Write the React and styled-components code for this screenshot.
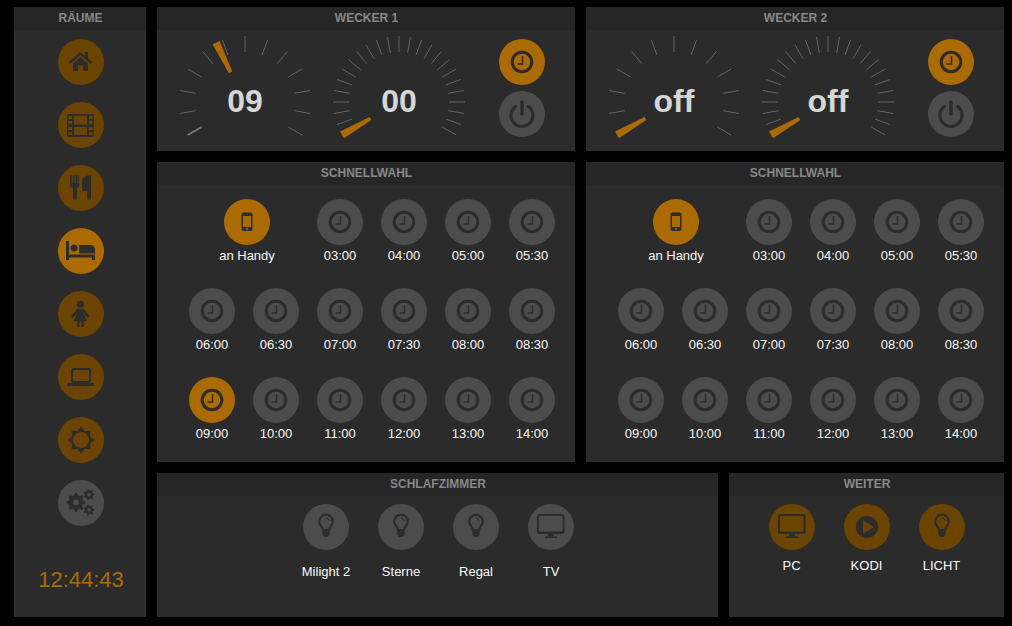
import React from 'react';
import styled, { createGlobalStyle } from 'styled-components';

const GlobalStyle = createGlobalStyle`
html, body {
  margin: 0;
  background: #000;
  font-family: "Liberation Sans", Arial, sans-serif;
}
`;

const ORANGE = '#ab6b00';
const DIM = '#6b4400';
const GREY = '#4c4c4c';
const INK = '#2c2c2c';

const Page = styled.div`
display: flex;
gap: 11px;
padding: 7px 0 0 14px;
width: 1012px;
height: 626px;
box-sizing: border-box;
overflow: hidden;
`;

const Main = styled.div`
display: flex;
flex-direction: column;
gap: 11px;
`;

const Row = styled.div`
display: flex;
gap: 11px;
`;

const Panel = styled.section`
width: ${p => p.$w}px;
height: ${p => p.$h}px;
background: #2b2b2b;
display: flex;
flex-direction: column;
`;

const PanelTitle = styled.div`
height: 23px;
line-height: 22px;
flex: none;
box-sizing: border-box;
padding-left: 1px;
background: #262626;
color: #888;
font-size: 12px;
font-weight: bold;
text-align: center;
`;

const SideBody = styled.div`
display: flex;
flex-direction: column;
align-items: center;
gap: 17px;
padding: 9px 0 0 1px;
`;

const Clock = styled.div`
color: ${ORANGE};
font-size: 22px;
line-height: 26px;
margin-top: 24px;
padding-left: 1px;
`;

const Circle = styled.div`
width: 46px;
height: 46px;
flex: none;
border-radius: 50%;
background: ${p => p.$bg};
`;

const IconSvg = styled.svg`
display: block;
width: 46px;
height: 46px;
`;

const AlarmBody = styled.div`
display: flex;
padding-left: 11px;
`;

const GaugeBox = styled.div`
position: relative;
width: 154px;
height: 121px;
`;

const GaugeValue = styled.div`
position: absolute;
left: 0;
right: 0;
top: 53px;
text-align: center;
color: #d6d6d6;
font-size: 32px;
line-height: 37px;
font-weight: bold;
`;

const ButtonColumn = styled.div`
display: flex;
flex-direction: column;
gap: 6px;
padding: 9px 0 0 23px;
`;

const QuickGrid = styled.div`
display: grid;
grid-template-columns: repeat(6, 64px);
grid-auto-rows: 89px;
padding: 14px 0 0 23px;
`;

const Item = styled.div`
display: flex;
flex-direction: column;
align-items: center;
grid-column: ${p => (p.$wide ? 'span 2' : 'auto')};
padding-left: ${p => (p.$wide ? '6px' : '0')};
`;

const Label = styled.div`
color: #fafafa;
font-size: 13px;
line-height: 15px;
margin-top: ${p => p.$gap}px;
white-space: nowrap;
`;

const ButtonRow = styled.div`
display: flex;
justify-content: center;
padding: 8px 0 0 ${p => p.$shift}px;
`;

const Slot = styled.div`
width: 75px;
display: flex;
flex-direction: column;
align-items: center;
`;

const pt = (r, deg, cx = 77, cy = 72) => {
  const a = (deg * Math.PI) / 180;
  return [cx + r * Math.sin(a), cy - r * Math.cos(a)];
};

const Gauge = ({ step, marker, value, firstLit }) => {
  const ticks = [];
  for (let d = -120; d <= 120; d += step) ticks.push(d);
  const a = pt(33, marker - 3.2);
  const b = pt(33, marker + 3.2);
  const c = pt(66, marker + 3.4);
  const e = pt(66, marker - 3.4);
  return (
    <GaugeBox>
      <svg width="154" height="121" style={{ display: 'block' }}>
        {ticks.map(d => {
          const [x1, y1] = pt(50, d);
          const [x2, y2] = pt(66, d);
          const lit = firstLit && d === -120;
          return <line key={d} x1={x1} y1={y1} x2={x2} y2={y2} stroke={lit ? '#777' : '#646464'} strokeWidth={lit ? 2 : 1} />;
        })}
        <polygon points={[a, b, c, e].map(q => q.join(',')).join(' ')} fill={ORANGE} />
      </svg>
      <GaugeValue>{value}</GaugeValue>
    </GaugeBox>
  );
};

const gearPath = (cx, cy, ro, ri, hole, teeth) => {
  let d = '';
  const n = teeth * 4;
  for (let i = 0; i < n; i++) {
    const r = i % 4 < 2 ? ro : ri;
    const ang = ((i - 0.5) / n) * Math.PI * 2;
    d += `${i ? 'L' : 'M'}${(cx + r * Math.cos(ang)).toFixed(2)} ${(cy + r * Math.sin(ang)).toFixed(2)}`;
  }
  d += `ZM${cx - hole} ${cy}a${hole} ${hole} 0 1 0 ${hole * 2} 0a${hole} ${hole} 0 1 0 ${-hole * 2} 0Z`;
  return d;
};

const sunStar = () => {
  const pts = [];
  for (let i = 0; i < 16; i++) {
    const [x, y] = pt(i % 2 ? 9.500 : 13.500, i * 22.5, 23, 23);
    pts.push(`${x.toFixed(2)},${y.toFixed(2)}`);
  }
  return pts.join(' ');
};

const Home = () => (
  <>
    <path d="M11.500 24 22.500 14.500 33.500 24" fill="none" stroke={INK} strokeWidth="2.400" />
    <path d="M27 13h3v7l-3-2.500zM15 24.500l7.500-6.200 7.500 6.200V32h-5v-5.500h-5V32h-5z" fill={INK} />
  </>
);

const Film = () => (
  <path
    fillRule="evenodd"
    fill={INK}
    d="M11 12h23a2 2 0 0 1 2 2v19a2 2 0 0 1-2 2H11a2 2 0 0 1-2-2V14a2 2 0 0 1 2-2zM10.500 14v3h3.500v-3zM10.500 19v3h3.500v-3zM10.500 25v3h3.500v-3zM10.500 30v3h3.500v-3zM31 14v3h3.500v-3zM31 19v3h3.500v-3zM31 25v3h3.500v-3zM31 30v3h3.500v-3zM16 14v8.500h13V14zM16 25v8h13v-8z"
  />
);

const Cutlery = () => (
  <path
    fill={INK}
    d="M12 10h1.800v8h1v-8h1.800v8h1v-8h1.800v8h.8v-8H21v10.500c0 1.400-1 2.300-2 2.800V33a2 2 0 0 1-4 0V23.300C14 22.800 12 21.900 12 20.500zM33 10v23a2 2 0 0 1-4 0v-7H26c-1.300 0-2-.8-2-2V17c0-4 4-7 9-7z"
  />
);

const Bed = () => (
  <>
    <path fill={INK} d="M8 13h3v13.500h26V32h-3v-2.500H11V32H8z" />
    <circle cx="16" cy="20" r="3.500" fill={INK} />
    <path fill={INK} d="M21 17h11c3 0 5 2 5 5v3.500H21z" />
  </>
);

const Female = () => (
  <>
    <circle cx="22.500" cy="13.300" r="3.500" fill={INK} />
    <path fill={INK} d="M19.300 17.800h6.400l5.800 7.700-2 1.500-4-4.800 3.500 8H25.800V36h-2.500v-5.800h-1.600V36h-2.500v-5.800H15.500l3.500-8-4 4.800-2-1.500z" />
  </>
);

const Laptop = () => (
  <>
    <rect x="14" y="15" width="18" height="13" rx="1.500" fill="none" stroke={INK} strokeWidth="2" />
    <path fill={INK} d="M9 29h27v1.200c0 1-.8 1.800-1.800 1.800H10.800c-1 0-1.800-.8-1.800-1.800z" />
  </>
);

const Sun = ({ bg }) => (
  <>
    <polygon points={sunStar()} fill={INK} />
    <circle cx="23" cy="23" r="8" fill={bg} />
  </>
);

const Cogs = () => (
  <path
    fillRule="evenodd"
    fill={INK}
    d={gearPath(18, 22.500, 9.500, 7.200, 3, 8) + gearPath(31, 14.500, 5.500, 4, 1.800, 7) + gearPath(31, 30, 5.500, 4, 1.800, 7)}
  />
);

const ClockIcon = () => (
  <>
    <circle cx="23" cy="23" r="9.800" fill="none" stroke={INK} strokeWidth="3" />
    <path d="M23.500 17V25H18.500" fill="none" stroke={INK} strokeWidth="1.500" />
  </>
);

const Power = () => (
  <>
    <path d="M16.500 15.500a11 11 0 1 0 13 0" fill="none" stroke={INK} strokeWidth="3.200" strokeLinecap="round" />
    <path d="M23 11v12" stroke={INK} strokeWidth="3.400" strokeLinecap="round" />
  </>
);

const Phone = ({ bg }) => (
  <>
    <rect x="17.500" y="13.500" width="11" height="18.500" rx="2" fill={INK} />
    <rect x="19" y="17" width="8" height="11" fill={bg} />
    <circle cx="23" cy="30" r="1" fill={bg} />
  </>
);

const Bulb = () => (
  <>
    <path d="M20 26c0-3-3.800-4.500-3.800-8.500a6.800 6.800 0 0 1 13.600 0c0 4-3.800 5.500-3.800 8.500z" fill="none" stroke={INK} strokeWidth="2.200" />
    <path fill={INK} d="M19.300 26h7.400v4.200L25 33h-4l-1.700-2.800z" />
    <path d="M23 14a3.500 3.500 0 0 1 3.200 3" fill="none" stroke={INK} strokeWidth="1" />
  </>
);

const Desktop = () => (
  <>
    <rect x="10" y="11" width="25.500" height="18" rx="1.500" fill="none" stroke={INK} strokeWidth="2" />
    <path fill={INK} d="M10 27.500h25.500V30H10zM20 30h6v2.500h3V34H17v-1.500h3z" />
  </>
);

const Play = ({ bg }) => (
  <>
    <circle cx="23" cy="23" r="11" fill={INK} />
    <path d="M19 16.500 30 23 19 29.500z" fill={bg} />
  </>
);

const Icon = ({ tone, of: Glyph }) => {
  const bg = { on: ORANGE, dim: DIM, off: GREY }[tone];
  return (
    <Circle $bg={bg}>
      <IconSvg viewBox="0 0 46 46">
        <Glyph bg={bg} />
      </IconSvg>
    </Circle>
  );
};

const rooms = [
  [Home, 'dim'], [Film, 'dim'], [Cutlery, 'dim'], [Bed, 'on'],
  [Female, 'dim'], [Laptop, 'dim'], [Sun, 'dim'], [Cogs, 'off'],
];

const times = [
  '03:00', '04:00', '05:00', '05:30',
  '06:00', '06:30', '07:00', '07:30', '08:00', '08:30',
  '09:00', '10:00', '11:00', '12:00', '13:00', '14:00',
];

const AlarmPanel = ({ title, hour, hourAt, minute, minuteAt, firstLit }) => (
  <Panel $w={418} $h={144}>
    <PanelTitle>{title}</PanelTitle>
    <AlarmBody>
      <Gauge step={20} marker={hourAt} value={hour} firstLit={firstLit} />
      <Gauge step={10} marker={minuteAt} value={minute} />
      <ButtonColumn>
        <Icon tone="on" of={ClockIcon} />
        <Icon tone="off" of={Power} />
      </ButtonColumn>
    </AlarmBody>
  </Panel>
);

const QuickPanel = ({ active }) => (
  <Panel $w={418} $h={300}>
    <PanelTitle>SCHNELLWAHL</PanelTitle>
    <QuickGrid>
      <Item $wide>
        <Icon tone="on" of={Phone} />
        <Label $gap={3}>an Handy</Label>
      </Item>
      {times.map(t => (
        <Item key={t}>
          <Icon tone={t === active ? 'on' : 'off'} of={ClockIcon} />
          <Label $gap={3}>{t}</Label>
        </Item>
      ))}
    </QuickGrid>
  </Panel>
);

const ButtonPanel = ({ title, w, tone, gap, shift, items }) => (
  <Panel $w={w} $h={144}>
    <PanelTitle>{title}</PanelTitle>
    <ButtonRow $shift={shift}>
      {items.map(([name, glyph]) => (
        <Slot key={name}>
          <Icon tone={tone} of={glyph} />
          <Label $gap={gap}>{name}</Label>
        </Slot>
      ))}
    </ButtonRow>
  </Panel>
);

export default function App() {
  return (
    <>
      <GlobalStyle />
      <Page>
        <Panel $w={132} $h={610}>
          <PanelTitle>RÄUME</PanelTitle>
          <SideBody>
            {rooms.map(([glyph, tone], i) => (
              <Icon key={i} tone={tone} of={glyph} />
            ))}
            <Clock>12:44:43</Clock>
          </SideBody>
        </Panel>
        <Main>
          <Row>
            <AlarmPanel title="WECKER 1" hour="09" hourAt={-26} minute="00" minuteAt={-120} firstLit />
            <AlarmPanel title="WECKER 2" hour="off" hourAt={-120} minute="off" minuteAt={-120} />
          </Row>
          <Row>
            <QuickPanel active="09:00" />
            <QuickPanel />
          </Row>
          <Row>
            <ButtonPanel
              title="SCHLAFZIMMER"
              w={561}
              tone="off"
              gap={14}
              shift={2}
              items={[['Milight 2', Bulb], ['Sterne', Bulb], ['Regal', Bulb], ['TV', Desktop]]}
            />
            <ButtonPanel
              title="WEITER"
              w={275}
              tone="dim"
              gap={8}
              shift={0}
              items={[['PC', Desktop], ['KODI', Play], ['LICHT', Bulb]]}
            />
          </Row>
        </Main>
      </Page>
    </>
  );
}
